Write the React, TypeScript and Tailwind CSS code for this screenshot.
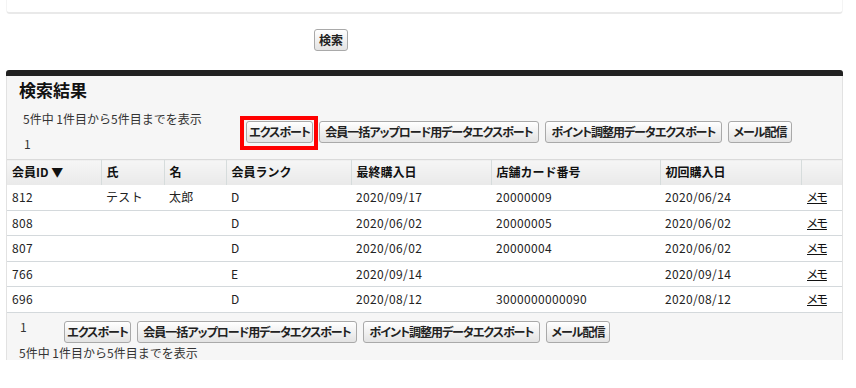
import React from "react";

type Row = {
  id: string;
  sei: string;
  mei: string;
  rank: string;
  last: string;
  card: string;
  first: string;
};

const rows: Row[] = [
  { id: "812", sei: "テスト", mei: "太郎", rank: "D", last: "2020/09/17", card: "20000009", first: "2020/06/24" },
  { id: "808", sei: "", mei: "", rank: "D", last: "2020/06/02", card: "20000005", first: "2020/06/02" },
  { id: "807", sei: "", mei: "", rank: "D", last: "2020/06/02", card: "20000004", first: "2020/06/02" },
  { id: "766", sei: "", mei: "", rank: "E", last: "2020/09/14", card: "", first: "2020/09/14" },
  { id: "696", sei: "", mei: "", rank: "D", last: "2020/08/12", card: "3000000000090", first: "2020/08/12" },
];

function Btn({ className, children }: { className: string; children: React.ReactNode }) {
  return (
    <button
      type="button"
      className={
        "h-[22px] shrink-0 rounded-[3px] border border-[#a9a9a9] bg-linear-to-b from-white to-[#e3e3e3] text-[12px] font-bold leading-none tracking-[-1px] text-[#222] whitespace-nowrap flex items-center justify-center [font-feature-settings:'palt'] " +
        className
      }
    >
      {children}
    </button>
  );
}

function ButtonRow({ highlight }: { highlight?: boolean }) {
  return (
    <div className="flex gap-[6px]">
      <div className="relative">
        <Btn className="w-[67px]">エクスポート</Btn>
        {highlight && (
          <div className="pointer-events-none absolute -top-[5px] -bottom-[7px] -left-[6px] -right-[5px] border-[4px] border-[#ff0000]" />
        )}
      </div>
      <Btn className="w-[220px]">会員一括アップロード用データエクスポート</Btn>
      <Btn className="w-[177px]">ポイント調整用データエクスポート</Btn>
      <Btn className="w-[64px]">メール配信</Btn>
    </div>
  );
}

export default function App() {
  const th =
    "h-[25px] border-t border-[#dadada] border-r border-r-[#d6dcdc] bg-linear-to-b from-[#f6f6f6] to-[#e9e9e9] pl-[5px] text-left align-middle text-[12px] font-bold text-[#111]";
  const td = "h-[25.5px] border-b border-[#d4d9dc] pl-[5px] align-middle text-[12px] text-[#222] tracking-[0.35px]";
  return (
    <div className="min-h-[388px] w-[856px] bg-white font-['Noto_Sans_CJK_JP','Noto_Sans',sans-serif] text-[#222]">
      <div className="ml-[6px] w-[837px]">
        <div className="h-[14px] rounded-b-[4px] border-x border-b-2 border-x-[#f4f4f4] border-b-[#e9e9e9]" />
        <div className="h-[56px] pl-[308px] pt-[15px]">
          <Btn className="w-[34px] h-[21px] tracking-normal">検索</Btn>
        </div>
        <div className="h-[6px] rounded-t-[3px] bg-[#222]" />
        <div className="border-x border-x-[#e2e2e2] bg-[#f6f6f6]">
          <div className="h-[27px] pl-[12px] pt-[2px] text-[17px] font-bold leading-[24px] text-[#111]">検索結果</div>
          <div className="flex h-[56px]">
            <div className="w-[239px] pl-[16px] pt-[8px] text-[12px] leading-[16px] text-[#333]">
              <div>5件中 1件目から5件目までを表示</div>
              <div className="mt-[9px] pl-[1px]">1</div>
            </div>
            <div className="pt-[18px]">
              <ButtonRow highlight />
            </div>
          </div>
          <table className="w-[835px] table-fixed border-collapse bg-white">
            <colgroup>
              <col className="w-[94px]" />
              <col className="w-[63px]" />
              <col className="w-[62px]" />
              <col className="w-[125px]" />
              <col className="w-[140px]" />
              <col className="w-[169px]" />
              <col className="w-[141px]" />
              <col className="w-[41px]" />
            </colgroup>
            <thead>
              <tr>
                <th className={th}>会員ID ▼</th>
                <th className={th}>氏</th>
                <th className={th}>名</th>
                <th className={th}>会員ランク</th>
                <th className={th}>最終購入日</th>
                <th className={th}>店舗カード番号</th>
                <th className={th}>初回購入日</th>
                <th className={th + " border-r-0"}></th>
              </tr>
            </thead>
            <tbody>
              {rows.map((r) => (
                <tr key={r.id}>
                  <td className={td}>{r.id}</td>
                  <td className={td}>{r.sei}</td>
                  <td className={td}>{r.mei}</td>
                  <td className={td}>{r.rank}</td>
                  <td className={td}>{r.last}</td>
                  <td className={td}>{r.card}</td>
                  <td className={td}>{r.first}</td>
                  <td className={td + " pl-[6px]"}>
                    <a href="#" className="text-[#111] underline tracking-[-1px] [font-feature-settings:'palt']">メモ</a>
                  </td>
                </tr>
              ))}
            </tbody>
          </table>
          <div className="pt-[8px] text-[12px] text-[#333]">
            <div className="flex">
              <div className="-mt-[1px] w-[57px] pl-[13px] leading-[14px]">1</div>
              <ButtonRow />
            </div>
            <div className="pl-[12px] pt-[3px] leading-[14px]">5件中 1件目から5件目までを表示</div>
          </div>
        </div>
      </div>
    </div>
  );
}
